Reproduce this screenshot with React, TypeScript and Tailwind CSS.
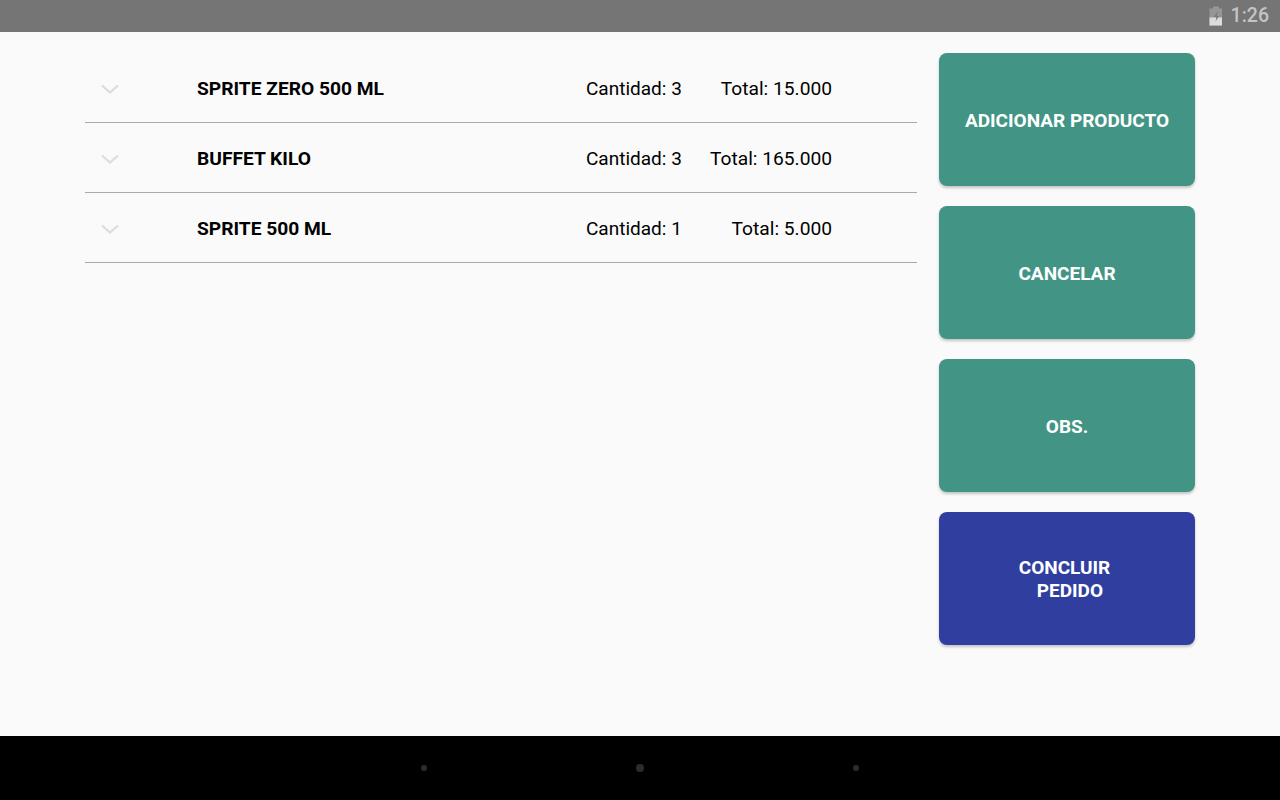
const items = [
  { name: "SPRITE ZERO 500 ML", qty: 3, total: "15.000" },
  { name: "BUFFET KILO", qty: 3, total: "165.000" },
  { name: "SPRITE 500 ML", qty: 1, total: "5.000" },
];

function Chevron() {
  return (
    <svg width="18" height="10" viewBox="0 0 18 10" fill="none" className="block">
      <path d="M1 1.5 L9 8.5 L17 1.5" stroke="#dcdcdc" strokeWidth="2.2" />
    </svg>
  );
}

function ActionButton({ children, color }: { children: React.ReactNode; color: string }) {
  return (
    <div
      className={`flex h-[133px] w-[256px] items-center justify-center rounded-[8px] text-[19px] font-bold leading-[23px] text-white shadow-[0_2px_3px_rgba(0,0,0,0.22)] ${color}`}
    >
      {children}
    </div>
  );
}

export default function App() {
  return (
    <div className="flex h-[800px] w-[1280px] flex-col overflow-hidden bg-[#fafafa] font-['Roboto',sans-serif]">
      <div className="flex h-8 items-center justify-end bg-[#757575] pr-[11px]">
        <svg width="16" height="20" viewBox="0 0 16 20" className="mr-[7px] block">
          <path d="M5 0.500h6v2h3v17H1.500V2.500H5z" fill="#969696" />
          <path d="M1.500 11.500h12.500v8H1.500z" fill="#dcdcdc" />
          <path d="M10 5l-4 6h2.500l-1 4.500 3.500-5.500H8.500z" fill="#757575" />
        </svg>
        <span className="text-[19.5px] font-medium leading-none text-[#c4c4c4]">1:26</span>
      </div>

      <div className="flex flex-1 pl-[85px] pt-[21px]">
        <div className="w-[832px]">
          {items.map((item) => (
            <div key={item.name} className="flex h-[70px] items-center border-b border-[#aaaaaa] pt-[2px] text-[19.2px] leading-none text-black">
              <div className="ml-[16px] w-[96px] pt-[1px]">
                <Chevron />
              </div>
              <div className="w-[389px] font-bold">{item.name}</div>
              <div className="w-[95px] whitespace-nowrap text-[19px]">Cantidad: {item.qty}</div>
              <div className="w-[151px] text-right">Total: {item.total}</div>
            </div>
          ))}
        </div>
        <div className="ml-[22px] flex flex-col gap-[20px]">
          <ActionButton color="bg-[#429585]"><span className="pt-[2px]">ADICIONAR PRODUCTO</span></ActionButton>
          <ActionButton color="bg-[#429585]"><span className="pt-[2px]">CANCELAR</span></ActionButton>
          <ActionButton color="bg-[#429585]"><span className="pt-[2px]">OBS.</span></ActionButton>
          <ActionButton color="bg-[#303f9f]">
            <div className="flex flex-col items-start pr-[5px] pt-[1px]">
              <span>CONCLUIR</span>
              <span className="ml-[18px]">PEDIDO</span>
            </div>
          </ActionButton>
        </div>
      </div>

      <div className="flex h-16 items-center justify-center gap-[209px] bg-black">
        <div className="h-[6px] w-[6px] rounded-full bg-[#2c2c2c]" />
        <div className="h-[8px] w-[8px] rounded-full bg-[#2c2c2c]" />
        <div className="h-[6px] w-[6px] rounded-full bg-[#2c2c2c]" />
      </div>
    </div>
  );
}
